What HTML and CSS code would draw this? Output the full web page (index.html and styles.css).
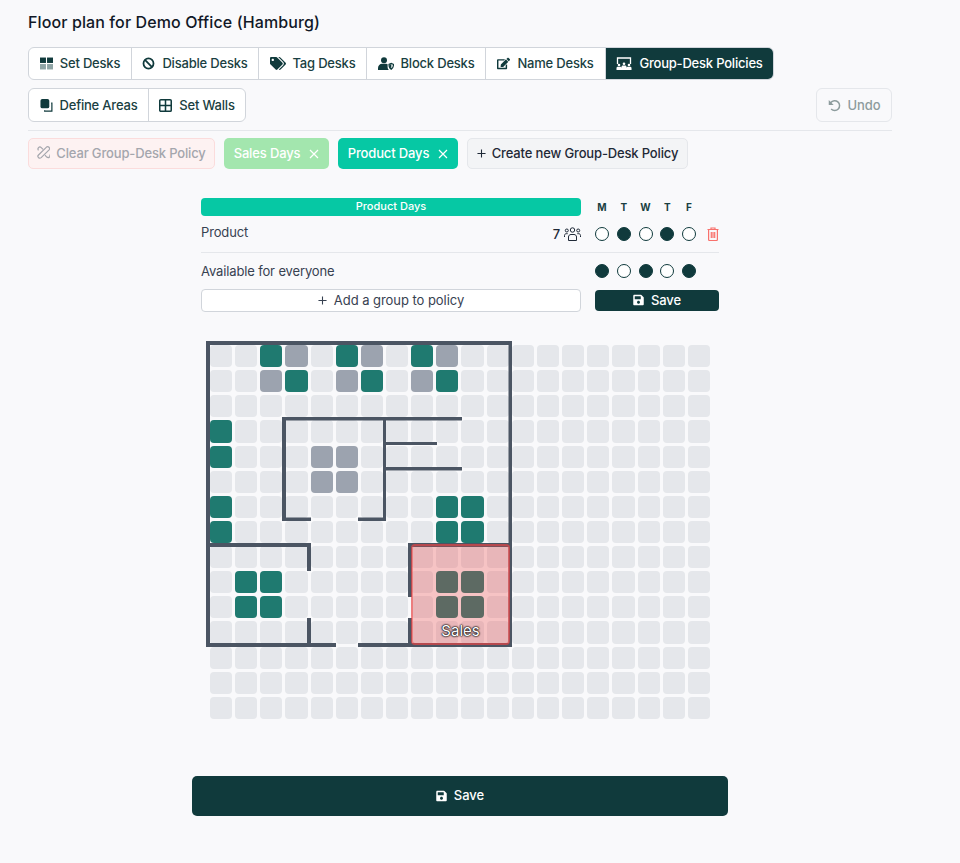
FILE: index.html
```html
<!DOCTYPE html>
<html lang="en">
<head>
<meta charset="utf-8">
<title>Floor plan</title>
<link rel="stylesheet" href="styles.css">
</head>
<body>
<main class="page">
  <h1 class="title">Floor plan for Demo Office (Hamburg)</h1>

  <div class="toolbar">
    <div class="seg seg-top">
      <button class="seg-btn w1"><svg class="ic" viewBox="0 0 12 11"><rect x="0" y="0" width="5.5" height="5" fill="#103a3c"/><rect x="6.5" y="0" width="5.5" height="5" fill="#103a3c"/><rect x="0" y="6" width="5.5" height="5" fill="#8fa5a6"/><rect x="6.5" y="6" width="5.5" height="5" fill="#8fa5a6"/></svg>Set Desks</button>
      <button class="seg-btn w2"><svg class="ic" viewBox="0 0 14 14"><circle cx="7" cy="7" r="5.4" fill="none" stroke="#103a3c" stroke-width="1.9"/><path d="M3.2 3.2l7.6 7.6" stroke="#103a3c" stroke-width="1.9"/></svg>Disable Desks</button>
      <button class="seg-btn w3"><svg class="ic ic-w" viewBox="0 0 640 512"><path fill="#103a3c" d="M497.941 225.941L286.059 14.059A48 48 0 0 0 252.118 0H48C21.49 0 0 21.49 0 48v204.118a48 48 0 0 0 14.059 33.941l211.882 211.882c18.744 18.745 49.136 18.746 67.882 0l204.118-204.118c18.745-18.745 18.745-49.137 0-67.882zM112 160c-26.51 0-48-21.49-48-48s21.49-48 48-48 48 21.49 48 48-21.49 48-48 48zm513.941 133.823L421.823 497.941c-18.745 18.745-49.137 18.745-67.882 0l-.36-.36L527.64 323.522c16.999-16.999 26.36-39.6 26.36-63.64s-9.362-46.641-26.36-63.64L331.397 0h48.721a48 48 0 0 1 33.941 14.059l211.882 211.882c18.745 18.745 18.745 49.137 0 67.882z"/></svg>Tag Desks</button>
      <button class="seg-btn w4"><svg class="ic ic-w" viewBox="0 0 16 13"><circle cx="6" cy="3.2" r="3" fill="#103a3c"/><path fill="#103a3c" d="M0 13v-2c0-2.6 2-4.2 4-4.2h4c.8 0 1.4.2 1.6.4V10c0 1.200.5 2.200 1.200 3z"/><path fill="none" stroke="#103a3c" stroke-width="1.2" d="M11 7.400l2.300-.9 2.200.9c0 2.500-.8 4-2.200 4.800-1.500-.8-2.300-2.300-2.300-4.800z"/><path fill="#103a3c" d="M13.300 7v4.800c-1-.7-1.800-2-1.800-4.100z"/></svg>Block Desks</button>
      <button class="seg-btn w5"><svg class="ic" viewBox="0 0 576 512"><path fill="#103a3c" d="M402.600 83.200l90.200 90.200c3.800 3.800 3.800 10 0 13.800L274.400 405.600l-92.800 10.300c-12.400 1.400-22.900-9.100-21.500-21.500l10.300-92.800L388.800 83.200c3.800-3.800 10-3.800 13.800 0zm162-22.900l-48.800-48.800c-15.200-15.200-39.900-15.200-55.200 0l-35.400 35.400c-3.800 3.800-3.800 10 0 13.800l90.200 90.200c3.800 3.800 10 3.800 13.800 0l35.400-35.400c15.200-15.300 15.200-40 0-55.200zM384 346.200V448H64V128h229.800c3.200 0 6.200-1.300 8.500-3.500l40-40c7.600-7.600 2.200-20.500-8.500-20.500H48C21.500 64 0 85.500 0 112v352c0 26.500 21.500 48 48 48h352c26.500 0 48-21.500 48-48V306.200c0-10.700-12.900-16-20.500-8.500l-40 40c-2.200 2.300-3.500 5.300-3.500 8.500z"/></svg>Name Desks</button>
      <button class="seg-btn w6 on"><svg class="ic ic-w" viewBox="0 0 16 13"><path fill="none" stroke="#fff" stroke-width="1.300" d="M1.500 7V1h13v6"/><circle cx="3" cy="8" r="1.300" fill="#fff"/><circle cx="8" cy="6.800" r="1.300" fill="#fff"/><circle cx="13" cy="8" r="1.300" fill="#fff"/><path fill="#fff" d="M.5 13v-2c0-.8.7-1.300 1.500-1.300h2c.8 0 1.500.5 1.500 1.300v2zM5.500 13v-3.200c0-.8.700-1.300 1.500-1.300h2c.8 0 1.500.5 1.500 1.300V13zM10.500 13v-2c0-.8.700-1.300 1.500-1.300h2c.8 0 1.500.5 1.500 1.300v2z"/></svg>Group-Desk Policies</button>
    </div>
    <div class="toolbar-row">
      <div class="seg">
        <button class="seg-btn w7"><svg class="ic" viewBox="0 0 13 14"><rect x="0" y="0" width="9.500" height="10" rx="2" fill="#103a3c"/><path fill="none" stroke="#103a3c" stroke-width="1.300" d="M11.500 4.500h.8V13H4.500v-1"/></svg>Define Areas</button>
        <button class="seg-btn w8"><svg class="ic" viewBox="0 0 12 12"><rect x=".7" y=".7" width="10.600" height="10.600" rx="1" fill="none" stroke="#103a3c" stroke-width="1.400"/><path d="M6 .7v10.600M.7 6h10.600" stroke="#103a3c" stroke-width="1.400"/></svg>Set Walls</button>
      </div>
      <button class="undo"><svg class="ic" viewBox="0 0 14 14"><path fill="none" stroke="#8d9c9d" stroke-width="1.600" d="M3.400 10.800A5.300 5.300 0 1 0 3 3.800L1.500 5.600"/><path fill="#8d9c9d" d="M.8 1.200v5.300h5.300z"/></svg>Undo</button>
    </div>
  </div>

  <div class="chips">
    <button class="chip chip-clear"><svg class="ic" viewBox="0 0 14 14"><g fill="none" stroke="#a4a6ad" stroke-width="1.300"><path d="M10.200 1.200c.9-.6 2-.5 2.700.2.800.8.800 2 .1 2.800l-8.500 8.300c-.9.800-2.100.800-2.900 0-.8-.8-.8-2 0-2.800z"/><path d="M1.600 4.600C.9 3.700.9 2.500 1.700 1.700c.8-.8 2-.8 2.900 0l1.900 1.900M8.600 9.900l1.900 2c.9.800 2.100.800 2.900 0 .7-.7.800-1.800.2-2.600"/></g></svg>Clear Group-Desk Policy</button>
    <button class="chip chip-sales">Sales Days<svg class="x" viewBox="0 0 10 10"><path d="M1 1l8 8M9 1l-8 8" stroke="#fff" stroke-width="1.200"/></svg></button>
    <button class="chip chip-product">Product Days<svg class="x" viewBox="0 0 10 10"><path d="M1 1l8 8M9 1l-8 8" stroke="#fff" stroke-width="1.200"/></svg></button>
    <button class="chip chip-new"><svg class="plus" viewBox="0 0 10 10"><path d="M5 .5v9M.5 5h9" stroke="#1f2937" stroke-width="1.200"/></svg>Create new Group-Desk Policy</button>
  </div>

  <div class="center">
    <section class="policy">
      <div class="row row-head">
        <div class="bar">Product Days</div>
        <div class="days"><b>M</b><b>T</b><b>W</b><b>T</b><b>F</b></div>
      </div>
      <div class="row row-group">
        <div class="group-name"><span>Product</span><span class="count">7<svg class="users" viewBox="0 0 17 14"><g fill="none" stroke="#1f2937" stroke-width="1"><circle cx="8.500" cy="3" r="2.200"/><circle cx="2.800" cy="3.500" r="1.500"/><circle cx="14.200" cy="3.500" r="1.500"/><path d="M4.500 13.500v-3.500c0-1.500 1-2.500 2.500-2.500h3c1.500 0 2.500 1 2.500 2.500v3.500zM.5 10V8.500c0-1 .7-1.800 1.700-1.800h1.500M16.500 10V8.500c0-1-.7-1.800-1.700-1.800h-1.500"/></g></svg></span></div>
        <div class="days"><i class="dot"></i><i class="dot full"></i><i class="dot"></i><i class="dot full"></i><i class="dot"></i></div>
        <svg class="trash" viewBox="0 0 12 14"><path fill="none" stroke="#f8716c" stroke-width="1.200" d="M.5 2.500h11M4 2.500V1h4v1.500M1.600 2.500v10c0 .6.400 1 1 1h6.800c.6 0 1-.4 1-1v-10M4.300 5v6M6 5v6M7.700 5v6"/></svg>
      </div>
      <div class="row row-all">
        <div class="group-name"><span>Available for everyone</span></div>
        <div class="days"><i class="dot full"></i><i class="dot"></i><i class="dot full"></i><i class="dot"></i><i class="dot full"></i></div>
      </div>
      <div class="row row-actions">
        <button class="add"><svg class="plus" viewBox="0 0 10 10"><path d="M5 .5v9M.5 5h9" stroke="#374151" stroke-width="1.200"/></svg>Add a group to policy</button>
        <button class="save-sm"><svg class="save-ic" viewBox="0 0 448 512"><path fill="#fff" d="M433.941 129.941l-83.882-83.882A48 48 0 0 0 316.118 32H48C21.490 32 0 53.490 0 80v352c0 26.510 21.490 48 48 48h352c26.510 0 48-21.490 48-48V163.882a48 48 0 0 0-14.059-33.941zM224 416c-35.346 0-64-28.654-64-64 0-35.346 28.654-64 64-64s64 28.654 64 64c0 35.346-28.654 64-64 64zm96-304.520V212c0 6.627-5.373 12-12 12H76c-6.627 0-12-5.373-12-12V108c0-6.627 5.373-12 12-12h228.520c3.183 0 6.235 1.264 8.485 3.515l3.480 3.480A11.996 11.996 0 0 1 320 111.480z"/></svg>Save</button>
      </div>
    </section>

    <div class="plan">
      <div class="grid">
        <div class="d"></div><div class="d"></div><div class="d g"></div><div class="d y"></div><div class="d"></div><div class="d g"></div><div class="d y"></div><div class="d"></div><div class="d g"></div><div class="d y"></div><div class="d"></div><div class="d"></div><div class="d"></div><div class="d"></div><div class="d"></div><div class="d"></div><div class="d"></div><div class="d"></div><div class="d"></div><div class="d"></div>
        <div class="d"></div><div class="d"></div><div class="d y"></div><div class="d g"></div><div class="d"></div><div class="d y"></div><div class="d g"></div><div class="d"></div><div class="d y"></div><div class="d g"></div><div class="d"></div><div class="d"></div><div class="d"></div><div class="d"></div><div class="d"></div><div class="d"></div><div class="d"></div><div class="d"></div><div class="d"></div><div class="d"></div>
        <div class="d"></div><div class="d"></div><div class="d"></div><div class="d"></div><div class="d"></div><div class="d"></div><div class="d"></div><div class="d"></div><div class="d"></div><div class="d"></div><div class="d"></div><div class="d"></div><div class="d"></div><div class="d"></div><div class="d"></div><div class="d"></div><div class="d"></div><div class="d"></div><div class="d"></div><div class="d"></div>
        <div class="d g"></div><div class="d"></div><div class="d"></div><div class="d"></div><div class="d"></div><div class="d"></div><div class="d"></div><div class="d"></div><div class="d"></div><div class="d"></div><div class="d"></div><div class="d"></div><div class="d"></div><div class="d"></div><div class="d"></div><div class="d"></div><div class="d"></div><div class="d"></div><div class="d"></div><div class="d"></div>
        <div class="d g"></div><div class="d"></div><div class="d"></div><div class="d"></div><div class="d y"></div><div class="d y"></div><div class="d"></div><div class="d"></div><div class="d"></div><div class="d"></div><div class="d"></div><div class="d"></div><div class="d"></div><div class="d"></div><div class="d"></div><div class="d"></div><div class="d"></div><div class="d"></div><div class="d"></div><div class="d"></div>
        <div class="d"></div><div class="d"></div><div class="d"></div><div class="d"></div><div class="d y"></div><div class="d y"></div><div class="d"></div><div class="d"></div><div class="d"></div><div class="d"></div><div class="d"></div><div class="d"></div><div class="d"></div><div class="d"></div><div class="d"></div><div class="d"></div><div class="d"></div><div class="d"></div><div class="d"></div><div class="d"></div>
        <div class="d g"></div><div class="d"></div><div class="d"></div><div class="d"></div><div class="d"></div><div class="d"></div><div class="d"></div><div class="d"></div><div class="d"></div><div class="d g"></div><div class="d g"></div><div class="d"></div><div class="d"></div><div class="d"></div><div class="d"></div><div class="d"></div><div class="d"></div><div class="d"></div><div class="d"></div><div class="d"></div>
        <div class="d g"></div><div class="d"></div><div class="d"></div><div class="d"></div><div class="d"></div><div class="d"></div><div class="d"></div><div class="d"></div><div class="d"></div><div class="d g"></div><div class="d g"></div><div class="d"></div><div class="d"></div><div class="d"></div><div class="d"></div><div class="d"></div><div class="d"></div><div class="d"></div><div class="d"></div><div class="d"></div>
        <div class="d"></div><div class="d"></div><div class="d"></div><div class="d"></div><div class="d"></div><div class="d"></div><div class="d"></div><div class="d"></div><div class="d"></div><div class="d"></div><div class="d"></div><div class="d"></div><div class="d"></div><div class="d"></div><div class="d"></div><div class="d"></div><div class="d"></div><div class="d"></div><div class="d"></div><div class="d"></div>
        <div class="d"></div><div class="d g"></div><div class="d g"></div><div class="d"></div><div class="d"></div><div class="d"></div><div class="d"></div><div class="d"></div><div class="d"></div><div class="d g"></div><div class="d g"></div><div class="d"></div><div class="d"></div><div class="d"></div><div class="d"></div><div class="d"></div><div class="d"></div><div class="d"></div><div class="d"></div><div class="d"></div>
        <div class="d"></div><div class="d g"></div><div class="d g"></div><div class="d"></div><div class="d"></div><div class="d"></div><div class="d"></div><div class="d"></div><div class="d"></div><div class="d g"></div><div class="d g"></div><div class="d"></div><div class="d"></div><div class="d"></div><div class="d"></div><div class="d"></div><div class="d"></div><div class="d"></div><div class="d"></div><div class="d"></div>
        <div class="d"></div><div class="d"></div><div class="d"></div><div class="d"></div><div class="d"></div><div class="d"></div><div class="d"></div><div class="d"></div><div class="d"></div><div class="d"></div><div class="d"></div><div class="d"></div><div class="d"></div><div class="d"></div><div class="d"></div><div class="d"></div><div class="d"></div><div class="d"></div><div class="d"></div><div class="d"></div>
        <div class="d"></div><div class="d"></div><div class="d"></div><div class="d"></div><div class="d"></div><div class="d"></div><div class="d"></div><div class="d"></div><div class="d"></div><div class="d"></div><div class="d"></div><div class="d"></div><div class="d"></div><div class="d"></div><div class="d"></div><div class="d"></div><div class="d"></div><div class="d"></div><div class="d"></div><div class="d"></div>
        <div class="d"></div><div class="d"></div><div class="d"></div><div class="d"></div><div class="d"></div><div class="d"></div><div class="d"></div><div class="d"></div><div class="d"></div><div class="d"></div><div class="d"></div><div class="d"></div><div class="d"></div><div class="d"></div><div class="d"></div><div class="d"></div><div class="d"></div><div class="d"></div><div class="d"></div><div class="d"></div>
        <div class="d"></div><div class="d"></div><div class="d"></div><div class="d"></div><div class="d"></div><div class="d"></div><div class="d"></div><div class="d"></div><div class="d"></div><div class="d"></div><div class="d"></div><div class="d"></div><div class="d"></div><div class="d"></div><div class="d"></div><div class="d"></div><div class="d"></div><div class="d"></div><div class="d"></div><div class="d"></div>
      </div>
      <svg class="walls" viewBox="206 341 306 306">
        <rect x="206" y="341" width="306" height="4"/>
        <rect x="206" y="341" width="4" height="306"/>
        <rect x="508.500" y="341" width="3.500" height="306"/>
        <rect x="206" y="643" width="130" height="4"/>
        <rect x="358" y="643" width="154" height="4"/>
        <rect x="282" y="417" width="180" height="3.500"/>
        <rect x="282" y="417" width="4" height="104"/>
        <rect x="282" y="517.500" width="29" height="3.500"/>
        <rect x="358" y="517.500" width="28" height="3.500"/>
        <rect x="383" y="417" width="3" height="104"/>
        <rect x="386" y="442" width="51" height="3"/>
        <rect x="386" y="467" width="76" height="3.500"/>
        <rect x="206" y="543" width="105" height="4"/>
        <rect x="307" y="543" width="4" height="28"/>
        <rect x="307" y="618" width="4" height="29"/>
        <rect x="408" y="543" width="4" height="54"/>
        <rect x="408" y="618" width="4" height="29"/>
        <rect x="408" y="543" width="104" height="4"/>
      </svg>
      <div class="area"><span class="area-label">Sales</span></div>
    </div>

    <button class="save-lg"><svg class="save-ic" viewBox="0 0 448 512"><path fill="#fff" d="M433.941 129.941l-83.882-83.882A48 48 0 0 0 316.118 32H48C21.490 32 0 53.490 0 80v352c0 26.510 21.490 48 48 48h352c26.510 0 48-21.490 48-48V163.882a48 48 0 0 0-14.059-33.941zM224 416c-35.346 0-64-28.654-64-64 0-35.346 28.654-64 64-64s64 28.654 64 64c0 35.346-28.654 64-64 64zm96-304.520V212c0 6.627-5.373 12-12 12H76c-6.627 0-12-5.373-12-12V108c0-6.627 5.373-12 12-12h228.520c3.183 0 6.235 1.264 8.485 3.515l3.480 3.480A11.996 11.996 0 0 1 320 111.480z"/></svg>Save</button>
  </div>
</main>
</body>
</html>
```
FILE: styles.css
```css
* { box-sizing: border-box; }
html, body { margin: 0; }
body {
  background: #f9f9fb;
  font-family: Inter, "Noto Sans", sans-serif;
  color: #1f2937;
}
button { font: inherit; cursor: pointer; }
.page { padding: 12px 68px 0 28px; height: 863px; }
.title { margin: 0; font-size: 16px; line-height: 20px; font-weight: 500; letter-spacing: .11px; color: #111827; }

.toolbar { margin-top: 15px; display: flex; flex-direction: column; gap: 8px; padding-bottom: 8px; border-bottom: 1px solid #e5e7eb; }
.toolbar-row { display: flex; justify-content: space-between; align-items: flex-start; }
.seg { display: inline-flex; align-self: flex-start; height: 34px; border: 1px solid #d1d5db; border-radius: 6px; background: #fff; }
.seg-top { height: 33px; }
.seg-btn {
  display: flex; align-items: center; justify-content: center; gap: 7px;
  height: 100%; padding: 0; border: 0; border-right: 1px solid #d1d5db; background: transparent;
  font-size: 13px; font-weight: 500; letter-spacing: -.2px; color: #1a3f42; white-space: nowrap;
}
.seg-top .seg-btn { padding-bottom: 1px; }
.seg-btn:first-child { border-radius: 5px 0 0 5px; }
.seg-btn:last-child { border-right: 0; border-radius: 0 5px 5px 0; }
.seg-btn.on { background: #103a3c; color: #fff; }
.w1 { width: 103px; }
.w2 { width: 127px; }
.w3 { width: 108px; }
.w4 { width: 119px; }
.w5 { width: 120px; }
.w6 { width: 167px; }
.w7 { width: 120px; }
.w8 { width: 96px; }
.ic { width: 13px; height: 13px; flex: none; }
.ic-w { width: 16px; }
.undo {
  display: flex; align-items: center; justify-content: center; gap: 7px;
  width: 76px; height: 34px; padding: 0; background: #f9f9fb;
  border: 1px solid #e5e7eb; border-radius: 6px; font-size: 13px; font-weight: 500; letter-spacing: -.1px; color: #8d9c9d;
}

.chips { display: flex; gap: 9px; margin-top: 7px; }
.chip {
  display: flex; align-items: center; justify-content: center;
  height: 31px; padding: 0 0 2px; border: 1px solid transparent; border-radius: 5px;
  font-size: 13px; font-weight: 500; letter-spacing: -.15px; white-space: nowrap;
}
.chip-clear { width: 187px; gap: 6px; background: #fdf2f2; border-color: #fbdcdc; color: #a4a6ad; }
.chip-sales { width: 105px; gap: 9px; background: #a3e6ae; color: #fff; }
.chip-product { width: 120px; gap: 9px; background: #06c8a4; color: #fff; }
.chip-new { width: 221px; gap: 6px; background: #f3f4f6; border-color: #e5e7eb; color: #1f2937; }
.x { width: 10px; height: 10px; margin-top: 2px; }
.plus { width: 9px; height: 9px; flex: none; margin-top: 1px; }

.center { display: flex; flex-direction: column; align-items: center; }
.policy { width: 518px; margin-top: 29px; }
.row { display: flex; align-items: center; }
.row-head { height: 18px; }
.bar {
  width: 380px; height: 18px; border-radius: 4px; background: #06c8a4; color: #fff;
  font-size: 11px; font-weight: 500; line-height: 17px; text-align: center; flex: none;
}
.days { display: flex; justify-content: space-between; width: 101px; margin-left: 14px; flex: none; }
.days b { width: 14px; text-align: center; font-size: 10px; font-weight: 700; color: #1a3f42; }
.dot { width: 14px; height: 14px; border: 1.2px solid #103a3c; border-radius: 50%; background: #fff; }
.dot.full { background: #103a3c; }
.row-group { height: 37px; border-bottom: 1px solid #e5e7eb; }
.group-name { display: flex; justify-content: space-between; width: 380px; font-size: 13px; line-height: 18px; letter-spacing: -.14px; color: #374151; flex: none; }
.row-group .group-name { margin-top: -3px; }
.count { display: flex; align-items: center; gap: 4px; font-weight: 500; margin-top: 2px; color: #1f2937; }
.users { width: 17px; height: 14px; }
.trash { width: 12px; height: 14px; margin-left: 11px; flex: none; }
.row-all { height: 36px; }
.row-actions { height: 23px; }
.add {
  display: flex; align-items: center; justify-content: center; gap: 7px; flex: none;
  width: 380px; height: 23px; padding: 0 0 2px; background: #fff;
  border: 1px solid #d1d5db; border-radius: 4px; font-size: 13px; letter-spacing: -.05px; color: #374151;
}
.save-sm {
  display: flex; align-items: center; justify-content: center; gap: 7px;
  width: 124px; height: 21px; margin-left: 14px; padding: 0 0 2px; background: #103a3c; color: #fff;
  border: 0; border-radius: 4px; font-size: 13px; font-weight: 500; letter-spacing: -.05px;
}
.save-ic { width: 11px; height: 12px; flex: none; margin-top: 1px; }

.plan { position: relative; width: 500px; height: 374px; margin-top: 33px; }
.grid { display: grid; grid-template-columns: repeat(20, 1fr); grid-template-rows: repeat(15, 1fr); gap: 3px; width: 100%; height: 100%; }
.d { border-radius: 4px; background: #e5e7eb; }
.d.g { background: #1f7a70; }
.d.y { background: #9ca3af; }
.walls { position: absolute; left: -4px; top: -4px; width: 306px; height: 306px; fill: #4b5563; }
.area {
  position: absolute; left: 201px; top: 199px; width: 99px; height: 101px;
  display: flex; align-items: flex-end; justify-content: center; padding-bottom: 4px;
  background: rgba(239, 68, 68, .3); border: 2px solid rgba(239, 68, 68, .5); border-radius: 4px;
}
.area-label { font-size: 15px; line-height: 16px; color: #fff; text-shadow: 0 0 2px #000, 0 0 2px #000, 0 0 1px #000; }

.save-lg {
  display: flex; align-items: center; justify-content: center; gap: 7px;
  width: 536px; height: 40px; margin-top: 57px; padding: 0 0 2px; background: #103a3c; color: #fff;
  border: 0; border-radius: 5px; font-size: 13px; font-weight: 500;
}
```
